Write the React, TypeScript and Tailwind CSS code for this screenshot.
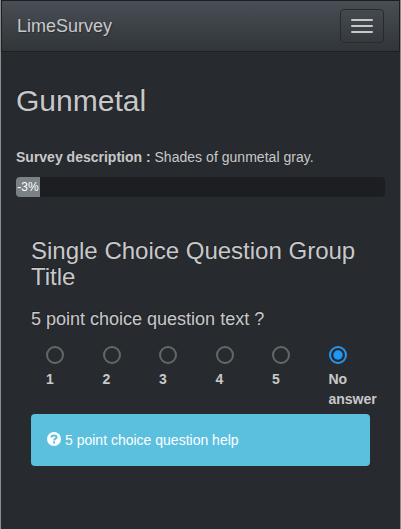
const choices = ['1', '2', '3', '4', '5', 'No answer'];

function Navbar() {
  return (
    <nav className="flex h-[52px] items-center justify-between border border-[#1c1e22] bg-linear-to-b from-[#484e55] via-[#3a3f44] via-60% to-[#313539] px-[15px]">
      <a className="text-[18px] leading-5 text-[#c8c8c8] [text-shadow:1px_1px_1px_rgba(0,0,0,0.3)]">LimeSurvey</a>
      <button
        aria-label="Toggle navigation"
        className="flex h-[34px] w-11 flex-col items-center justify-center gap-1 rounded-[4px] border border-[#272b2e]"
      >
        <span className="h-[2px] w-[22px] rounded-[1px] bg-[#c8c8c8]" />
        <span className="h-[2px] w-[22px] rounded-[1px] bg-[#c8c8c8]" />
        <span className="h-[2px] w-[22px] rounded-[1px] bg-[#c8c8c8]" />
      </button>
    </nav>
  );
}

function Choice({ label, checked }: { label: string; checked: boolean }) {
  return (
    <label className="w-[56.5px] pl-[15px] text-[14px] font-bold leading-5">
      <svg viewBox="0 0 18 18" className="block size-[18px]">
        <circle cx="9" cy="9" r="8" fill="none" stroke={checked ? '#2196f3' : '#666666'} strokeWidth="2" />
        {checked && <circle cx="9" cy="9" r="4.7" fill="#2196f3" />}
      </svg>
      <span className="mt-[5px] block">{label}</span>
    </label>
  );
}

function HelpBox() {
  return (
    <div className="flex h-[52px] items-center gap-1 rounded-[4px] bg-[#5bc0de] pl-4 text-[14px] leading-5 text-white">
      <svg viewBox="0 0 14 14" className="-mt-[2px] size-[14px]">
        <circle cx="7" cy="7" r="7" fill="#fff" />
        <path
          d="M4.4 5.5C4.4 4 5.5 3.4 7 3.4s2.6.7 2.6 1.8c0 1.6-2.5 1.4-2.5 3.4"
          fill="none"
          stroke="#5bc0de"
          strokeWidth="2"
        />
        <path d="M6 9.4h2.1v2H6z" fill="#5bc0de" />
      </svg>
      <span>5 point choice question help</span>
    </div>
  );
}

export default function App() {
  return (
    <div className="h-[529px] w-[401px] overflow-hidden border-x border-[#8b8c8e] bg-[#272b30] font-['Liberation_Sans',Arial,sans-serif] text-[#c8c8c8]">
      <Navbar />
      <main className="px-[15px]">
        <h1 className="pt-8 text-[30px] leading-[33px] [text-shadow:-1px_-1px_0_rgba(0,0,0,0.3)]">Gunmetal</h1>
        <p className="mt-[30px] text-[14px] leading-5">
          <b>Survey description :</b> <span className="tracking-[0.03px]">Shades of gunmetal gray.</span>
        </p>
        <div className="mt-[10px] h-5 overflow-hidden rounded-[4px] bg-[#1c1e22]">
          <div className="h-full w-6 bg-[#7a8288] text-center text-[12px] leading-5 text-white">-3%</div>
        </div>
        <section className="px-[15px] pt-[41px]">
          <h2 className="text-[24px] leading-[26px] [text-shadow:-1px_-1px_0_rgba(0,0,0,0.3)]">
            Single Choice Question Group Title
          </h2>
          <h3 className="mt-[19px] text-[18px] leading-5 [text-shadow:-1px_-1px_0_rgba(0,0,0,0.3)]">
            5 point choice question text ?
          </h3>
          <div className="mt-[17px] flex h-[68px]">
            {choices.map((label) => (
              <Choice key={label} label={label} checked={label === 'No answer'} />
            ))}
          </div>
          <HelpBox />
        </section>
      </main>
    </div>
  );
}
